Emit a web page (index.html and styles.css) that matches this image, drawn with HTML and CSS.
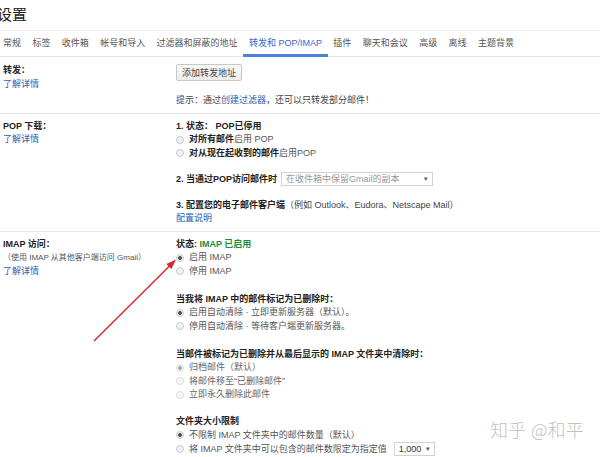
FILE: index.html
```html
<!DOCTYPE html>
<html lang="zh-CN">
<head>
<meta charset="utf-8">
<title>设置</title>
<link rel="stylesheet" href="styles.css">
</head>
<body>
<div class="page">
  <header class="title-bar"><h1 class="title">设置</h1></header>
  <nav class="tabs">
    <span class="tab">常规</span>
    <span class="tab">标签</span>
    <span class="tab">收件箱</span>
    <span class="tab">帐号和导入</span>
    <span class="tab">过滤器和屏蔽的地址</span>
    <span class="tab active">转发和 POP/IMAP</span>
    <span class="tab">插件</span>
    <span class="tab">聊天和会议</span>
    <span class="tab">高级</span>
    <span class="tab">离线</span>
    <span class="tab">主题背景</span>
  </nav>

  <section class="row row-forward">
    <div class="label">
      <div class="label-title">转发：</div>
      <a class="link">了解详情</a>
    </div>
    <div class="content">
      <button class="btn">添加转发地址</button>
      <p class="hint">提示：通过<a class="link">创建过滤器</a>，还可以只转发部分邮件！</p>
    </div>
  </section>

  <section class="row row-sep">
    <div class="label">
      <div class="label-title">POP 下载：</div>
      <a class="link">了解详情</a>
    </div>
    <div class="content">
      <div class="group">
        <div class="heading">1. 状态： POP已停用</div>
        <div class="opt"><span class="radio"></span><span><b class="strong">对所有邮件</b>启用 POP</span></div>
        <div class="opt"><span class="radio"></span><span><b class="strong">对从现在起收到的邮件</b>启用POP</span></div>
      </div>
      <div class="group g-select">
        <div class="heading sel-row">2. 当通过POP访问邮件时<span class="select select-wide"><span class="sel-text muted">在收件箱中保留Gmail的副本</span><span class="caret">▾</span></span></div>
      </div>
      <div class="group g-client">
        <div class="heading">3. 配置您的电子邮件客户端<span class="normal">（例如 Outlook、Eudora、Netscape Mail）</span></div>
        <a class="link">配置说明</a>
      </div>
    </div>
  </section>

  <section class="row row-sep">
    <div class="label">
      <div class="label-title">IMAP 访问：</div>
      <div class="sub">（使用 IMAP 从其他客户端访问 Gmail）</div>
      <a class="link">了解详情</a>
    </div>
    <div class="content">
      <div class="group">
        <div class="heading">状态: <span class="green">IMAP 已启用</span></div>
        <div class="opt"><span class="radio checked"></span><span>启用 IMAP</span></div>
        <div class="opt"><span class="radio"></span><span>停用 IMAP</span></div>
      </div>
      <div class="group g-imap">
        <div class="heading">当我将 IMAP 中的邮件标记为已删除时：</div>
        <div class="opt"><span class="radio checked"></span><span>启用自动清除 · 立即更新服务器（默认）。</span></div>
        <div class="opt"><span class="radio"></span><span>停用自动清除 · 等待客户端更新服务器。</span></div>
      </div>
      <div class="group g-imap">
        <div class="heading">当邮件被标记为已删除并从最后显示的 IMAP 文件夹中清除时：</div>
        <div class="opt dim"><span class="radio checked"></span><span>归档邮件（默认）</span></div>
        <div class="opt dim"><span class="radio"></span><span>将邮件移至“已删除邮件”</span></div>
        <div class="opt dim"><span class="radio"></span><span>立即永久删除此邮件</span></div>
      </div>
      <div class="group g-limit">
        <div class="heading">文件夹大小限制</div>
        <div class="opt"><span class="radio checked"></span><span>不限制 IMAP 文件夹中的邮件数量（默认）</span></div>
        <div class="opt sel-row"><span class="radio"></span><span>将 IMAP 文件夹中可以包含的邮件数限定为指定值</span><span class="select select-small"><span class="sel-text">1,000</span><span class="caret">▾</span></span></div>
      </div>
    </div>
  </section>
</div>

<svg class="arrow" width="600" height="457" viewBox="0 0 600 457" xmlns="http://www.w3.org/2000/svg">
  <line x1="94" y1="341" x2="169.5" y2="266" stroke="#d9262b" stroke-width="1.4"/>
  <polygon points="176,259.5 171.4,269 166.4,264.1" fill="#d9262b"/>
</svg>
<div class="watermark">知乎 @和平</div>
</body>
</html>
```

FILE: styles.css
```css
* {
  box-sizing: border-box;
  margin: 0;
  padding: 0;
}

body {
  margin: 0;
  width: 600px;
  height: 457px;
  overflow: hidden;
  background: #fff;
  position: relative;
  font-family: "Liberation Sans", Arial, "Noto Sans CJK SC", sans-serif;
  font-size: 9px;
  line-height: 13.5px;
  color: #222;
}

.page {
  width: 600px;
}

.title-bar {
  height: 31px;
  padding-top: 5px;
  border-bottom: 1px solid #efefef;
}

.title {
  font-size: 15px;
  line-height: 20px;
  font-weight: normal;
  margin-left: -3px;
  color: #222;
}

.tabs {
  display: flex;
  height: 26px;
  margin-left: -2.7px;
  border-bottom: 1px solid #e6e6e6;
}

.tab {
  position: relative;
  padding: 0 5.7px;
  line-height: 25px;
  color: #555;
  white-space: nowrap;
}

.tab.active {
  color: #3367d6;
}

.tab.active::after {
  content: "";
  position: absolute;
  left: 0;
  right: 0;
  bottom: -1px;
  height: 3px;
  background: #4a80e0;
}

.row {
  display: grid;
  grid-template-columns: 176px 1fr;
}

.row-forward {
  padding: 7px 0 5px;
}

.row-sep {
  border-top: 1px solid #e8e8e8;
  padding: 6px 0 5px;
}

.label {
  padding-left: 3px;
  display: flex;
  flex-direction: column;
  align-items: flex-start;
}

.label-title {
  font-weight: bold;
  color: #222;
}

.sub {
  font-size: 8px;
  color: #555;
}

.link {
  color: #2a5db0;
  text-decoration: none;
}

.content {
  display: flex;
  flex-direction: column;
  align-items: flex-start;
}

.btn {
  margin-top: 0;
  height: 17px;
  padding: 0 5px;
  font-family: inherit;
  font-size: 9px;
  color: #444;
  border: 1px solid #c8c8c8;
  border-radius: 2px;
  background: linear-gradient(#f8f8f8, #ececec);
}

.hint {
  margin-top: 13px;
  color: #444;
}

.group {
  display: flex;
  flex-direction: column;
  align-items: flex-start;
}

.g-select {
  margin-top: 11.5px;
}

.g-client {
  margin-top: 13px;
}

.g-imap {
  margin-top: 14.5px;
}

.g-limit {
  margin-top: 13.5px;
}

.heading {
  font-weight: bold;
  color: #222;
  white-space: nowrap;
}

.heading .normal {
  font-weight: normal;
  color: #444;
}

.green {
  color: #1e8e3e;
}

.strong {
  font-weight: bold;
  color: #222;
}

.opt {
  display: flex;
  align-items: center;
  color: #555;
  white-space: nowrap;
}

.opt.dim {
  color: #666;
}

.radio {
  width: 8px;
  height: 8px;
  margin-right: 5px;
  border-radius: 50%;
  border: 1px solid #c9c9c9;
  background: #f2f2f2;
  flex: none;
}

.radio.checked {
  background: radial-gradient(circle, #555 0 1.6px, #f2f2f2 2.2px);
}

.opt.dim .radio {
  border-color: #ddd;
  background: #f7f7f7;
}

.opt.dim .radio.checked {
  background: radial-gradient(circle, #aaa 0 1.6px, #f7f7f7 2.2px);
}

.sel-row {
  display: flex;
  align-items: center;
  line-height: 14px;
}

.select {
  display: inline-flex;
  justify-content: space-between;
  align-items: center;
  height: 14px;
  margin-left: 4px;
  padding: 0 4px;
  border: 1px solid #d2d2d2;
  font-weight: normal;
  color: #333;
  background: #fff;
}

.select-wide {
  width: 152px;
}

.select-small {
  width: 41px;
  margin-left: 7px;
}

.muted {
  color: #999;
}

.caret {
  font-size: 7px;
  color: #555;
}

.arrow {
  position: absolute;
  left: 0;
  top: 0;
  pointer-events: none;
}

.watermark {
  position: absolute;
  left: 490px;
  top: 417px;
  font-family: "Noto Sans CJK SC", sans-serif;
  font-size: 18px;
  line-height: 24px;
  font-weight: 300;
  letter-spacing: 0.3px;
  color: #c2c2c2;
  white-space: nowrap;
}
```
